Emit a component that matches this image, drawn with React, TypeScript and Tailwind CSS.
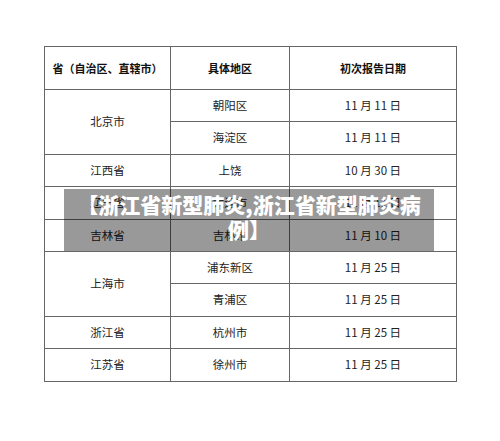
import React from "react";

const font = { fontFamily: '"Noto Sans CJK SC", "Noto Sans", sans-serif' };

type Row = { prov?: string; span?: number; city: string; date: string };

const rows: Row[] = [
  { prov: "北京市", span: 2, city: "朝阳区", date: "11 月 11 日" },
  { city: "海淀区", date: "11 月 11 日" },
  { prov: "江西省", span: 1, city: "上饶", date: "10 月 30 日" },
  { prov: "辽宁省", span: 1, city: "大连市", date: "11 月 11 日" },
  { prov: "吉林省", span: 1, city: "吉林市", date: "11 月 10 日" },
  { prov: "上海市", span: 2, city: "浦东新区", date: "11 月 25 日" },
  { city: "青浦区", date: "11 月 25 日" },
  { prov: "浙江省", span: 1, city: "杭州市", date: "11 月 25 日" },
  { prov: "江苏省", span: 1, city: "徐州市", date: "11 月 25 日" },
];

export default function App() {
  return (
    <div className="relative w-[500px] h-[441px] bg-white overflow-hidden" style={font}>
      <div className="pt-[46px] pl-[44px]">
        <table className="w-[412px] table-fixed border-collapse text-[11.5px] text-[#222222]">
          <colgroup>
            <col className="w-[126px]" />
            <col className="w-[119px]" />
            <col className="w-[167px]" />
          </colgroup>
          <thead>
            <tr className="h-[43px]">
              <th className="border border-[#666666] font-bold text-[11px] text-[#111111] text-center align-middle">
                省（自治区、直辖市）
              </th>
              <th className="border border-[#666666] font-bold text-[11px] text-[#111111] text-center align-middle">
                具体地区
              </th>
              <th className="border border-[#666666] font-bold text-[11px] text-[#111111] text-center align-middle">
                初次报告日期
              </th>
            </tr>
          </thead>
          <tbody>
            {rows.map((r, i) => (
              <tr key={i} className="h-[32.4px]">
                {r.prov && (
                  <td
                    rowSpan={r.span}
                    className="border border-[#666666] text-center align-middle"
                  >
                    {r.prov}
                  </td>
                )}
                <td className="border border-[#666666] text-center align-middle">{r.city}</td>
                <td className="border border-[#666666] text-center align-middle">{r.date}</td>
              </tr>
            ))}
          </tbody>
        </table>
      </div>
      <div className="absolute left-[64px] top-[189px] w-[370px] h-[62px] bg-black/40 pt-[3px] text-center text-white font-black text-[21px] leading-[25px]">
        【浙江省新型肺炎,浙江省新型肺炎病例】
      </div>
    </div>
  );
}
